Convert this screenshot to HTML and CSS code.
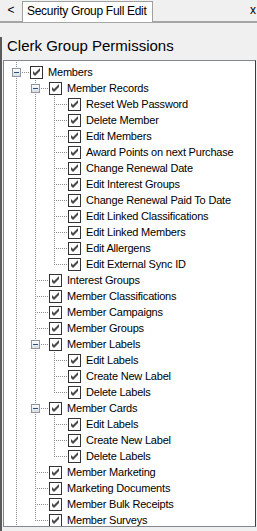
FILE: index.html
```html
<!DOCTYPE html>
<html lang="en">
<head>
  <meta charset="UTF-8">
  <meta name="viewport" content="width=device-width, initial-scale=1.0">
  <title>Security Group Full Edit</title>
  <link rel="stylesheet" href="styles.css">
</head>
<body>
  <!-- shared glyphs -->
  <svg class="defs" width="0" height="0">
    <defs>
      <linearGradient id="expfill" x1="0" y1="0" x2="0" y2="1">
        <stop offset="0" stop-color="#ffffff"/>
        <stop offset="1" stop-color="#d8dde4"/>
      </linearGradient>
      <symbol id="chk" viewBox="0 0 13 13">
        <rect x="0.5" y="0.5" width="12" height="12" fill="#fff" stroke="#333"/>
        <polygon points="3,5 5,7 10,2 10,5 5,10 3,8" fill="#4a4a4a"/>
      </symbol>
      <symbol id="minus" viewBox="0 0 9 9">
        <rect x="0.5" y="0.5" width="8" height="8" fill="url(#expfill)" stroke="#8e959e"/>
        <rect x="2" y="4" width="5" height="1" fill="#2d4f7c"/>
      </symbol>
    </defs>
  </svg>

  <!-- Tab strip -->
  <div class="tabs">
    <div class="back">&lt;</div>
    <div class="tab">Security Group Full Edit</div>
    <div class="close">x</div>
  </div>

  <!-- Panel -->
  <div class="panel">
    <div class="title">Clerk Group Permissions</div>

    <ul class="tree">
      <li class="node"><span class="col t root"><svg class="exp"><use href="#minus"/></svg></span><svg class="chk"><use href="#chk"/></svg>Members</li>

      <li class="node"><span class="col v"></span><span class="col t"><svg class="exp"><use href="#minus"/></svg></span><svg class="chk"><use href="#chk"/></svg>Member Records</li>
      <li class="node"><span class="col v"></span><span class="col v"></span><span class="col t"></span><svg class="chk"><use href="#chk"/></svg>Reset Web Password</li>
      <li class="node"><span class="col v"></span><span class="col v"></span><span class="col t"></span><svg class="chk"><use href="#chk"/></svg>Delete Member</li>
      <li class="node"><span class="col v"></span><span class="col v"></span><span class="col t"></span><svg class="chk"><use href="#chk"/></svg>Edit Members</li>
      <li class="node"><span class="col v"></span><span class="col v"></span><span class="col t"></span><svg class="chk"><use href="#chk"/></svg>Award Points on next Purchase</li>
      <li class="node"><span class="col v"></span><span class="col v"></span><span class="col t"></span><svg class="chk"><use href="#chk"/></svg>Change Renewal Date</li>
      <li class="node"><span class="col v"></span><span class="col v"></span><span class="col t"></span><svg class="chk"><use href="#chk"/></svg>Edit Interest Groups</li>
      <li class="node"><span class="col v"></span><span class="col v"></span><span class="col t"></span><svg class="chk"><use href="#chk"/></svg>Change Renewal Paid To Date</li>
      <li class="node"><span class="col v"></span><span class="col v"></span><span class="col t"></span><svg class="chk"><use href="#chk"/></svg>Edit Linked Classifications</li>
      <li class="node"><span class="col v"></span><span class="col v"></span><span class="col t"></span><svg class="chk"><use href="#chk"/></svg>Edit Linked Members</li>
      <li class="node"><span class="col v"></span><span class="col v"></span><span class="col t"></span><svg class="chk"><use href="#chk"/></svg>Edit Allergens</li>
      <li class="node"><span class="col v"></span><span class="col v"></span><span class="col l"></span><svg class="chk"><use href="#chk"/></svg>Edit External Sync ID</li>

      <li class="node"><span class="col v"></span><span class="col t"></span><svg class="chk"><use href="#chk"/></svg>Interest Groups</li>
      <li class="node"><span class="col v"></span><span class="col t"></span><svg class="chk"><use href="#chk"/></svg>Member Classifications</li>
      <li class="node"><span class="col v"></span><span class="col t"></span><svg class="chk"><use href="#chk"/></svg>Member Campaigns</li>
      <li class="node"><span class="col v"></span><span class="col t"></span><svg class="chk"><use href="#chk"/></svg>Member Groups</li>

      <li class="node"><span class="col v"></span><span class="col t"><svg class="exp"><use href="#minus"/></svg></span><svg class="chk"><use href="#chk"/></svg>Member Labels</li>
      <li class="node"><span class="col v"></span><span class="col v"></span><span class="col t"></span><svg class="chk"><use href="#chk"/></svg>Edit Labels</li>
      <li class="node"><span class="col v"></span><span class="col v"></span><span class="col t"></span><svg class="chk"><use href="#chk"/></svg>Create New Label</li>
      <li class="node"><span class="col v"></span><span class="col v"></span><span class="col l"></span><svg class="chk"><use href="#chk"/></svg>Delete Labels</li>

      <li class="node"><span class="col v"></span><span class="col t"><svg class="exp"><use href="#minus"/></svg></span><svg class="chk"><use href="#chk"/></svg>Member Cards</li>
      <li class="node"><span class="col v"></span><span class="col v"></span><span class="col t"></span><svg class="chk"><use href="#chk"/></svg>Edit Labels</li>
      <li class="node"><span class="col v"></span><span class="col v"></span><span class="col t"></span><svg class="chk"><use href="#chk"/></svg>Create New Label</li>
      <li class="node"><span class="col v"></span><span class="col v"></span><span class="col l"></span><svg class="chk"><use href="#chk"/></svg>Delete Labels</li>

      <li class="node"><span class="col v"></span><span class="col t"></span><svg class="chk"><use href="#chk"/></svg>Member Marketing</li>
      <li class="node"><span class="col v"></span><span class="col t"></span><svg class="chk"><use href="#chk"/></svg>Marketing Documents</li>
      <li class="node"><span class="col v"></span><span class="col t"></span><svg class="chk"><use href="#chk"/></svg>Member Bulk Receipts</li>
      <li class="node"><span class="col v"></span><span class="col l"></span><svg class="chk"><use href="#chk"/></svg>Member Surveys</li>
    </ul>
  </div>
</body>
</html>
```

FILE: styles.css
```css
html, body {
  margin: 0;
  width: 257px;
  height: 531px;
  overflow: hidden;
}

body {
  background: #f0f0f0;
  font-family: 'Liberation Sans', Arial, sans-serif;
  color: #000;
}

.defs {
  position: absolute;
}

/* Tab strip */
.tabs {
  display: flex;
  height: 21px;
  border-bottom: 2px solid #a5a5a5;
  font-size: 12px;
}

.back {
  width: 22px;
  line-height: 21px;
  text-align: center;
}

.tab {
  margin-top: 1px;
  height: 20px;
  line-height: 19px;
  padding: 0 5px 0 4px;
  background: #fff;
  border: 1px solid #a0a0a0;
  border-bottom: none;
  letter-spacing: -0.3px;
}

.close {
  margin-left: auto;
  padding-right: 1px;
  line-height: 21px;
}

/* Panel */
.panel {
  height: 505px;
  border-left: 2px solid #5a5a5a;
  border-bottom: 3px solid #4a4a4a;
  padding-left: 1px;
}

.title {
  margin-top: 14px;
  margin-left: 4px;
  height: 18px;
  line-height: 18px;
  font-size: 15px;
  margin-bottom: 5px;
}

.tree {
  list-style: none;
  margin: 0;
  width: 251px;
  height: 465px;
  padding: 3px 0 0 3px;
  box-sizing: border-box;
  height: 467px;
  width: 253px;
  background: #fff;
  border: 1px solid #828790;
  border-right-color: #3c3c3c;
  overflow: hidden;
  font-size: 11px;
  letter-spacing: -0.2px;
}

.node {
  display: flex;
  align-items: center;
  height: 16px;
  line-height: 16px;
  white-space: nowrap;
}

.col {
  position: relative;
  flex: none;
  width: 19px;
  height: 16px;
}

.col::before,
.col::after {
  content: '';
  position: absolute;
}

.v::before,
.t::before,
.l::before {
  left: 9px;
  top: 0;
  width: 1px;
  height: 16px;
  background: repeating-linear-gradient(to bottom, #8c8c8c 0 1px, transparent 1px 2px);
}

.root::before {
  top: -4px;
  height: 20px;
}

.l::before {
  height: 9px;
}

.t::after,
.l::after {
  left: 11px;
  top: 8px;
  width: 11px;
  height: 1px;
  background: repeating-linear-gradient(to right, #8c8c8c 0 1px, transparent 1px 2px);
}

.exp {
  position: absolute;
  z-index: 1;
  left: 5px;
  top: 4px;
  width: 9px;
  height: 9px;
}

.chk {
  flex: none;
  width: 13px;
  height: 13px;
  margin: 0 5px 0 4px;
}
```
